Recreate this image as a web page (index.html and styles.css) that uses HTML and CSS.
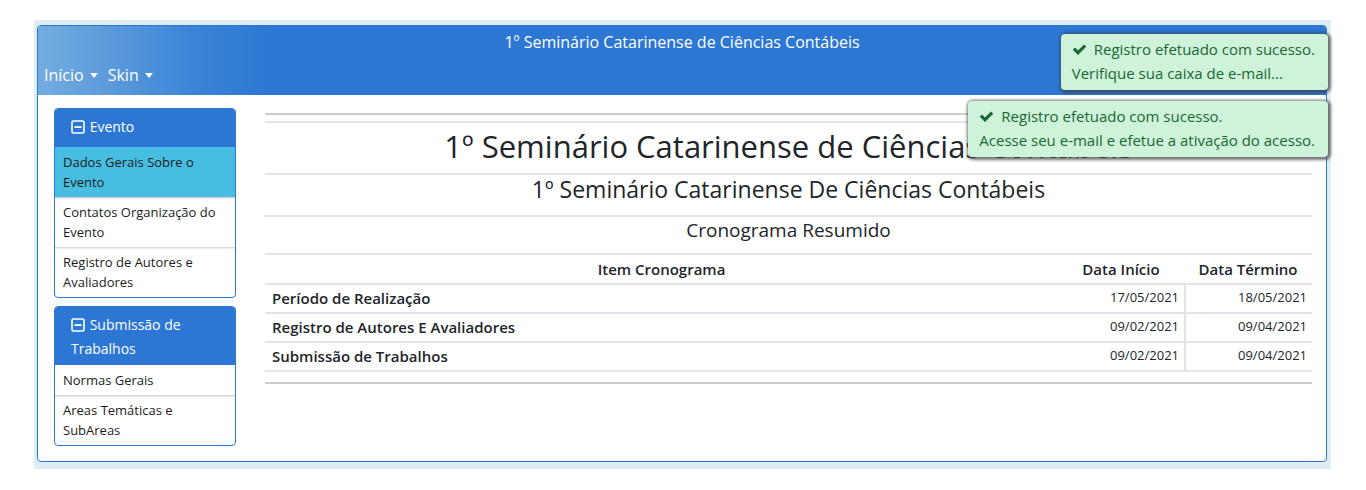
FILE: index.html
```html
<!DOCTYPE html>
<html lang="pt-BR">
<head>
<meta charset="utf-8">
<title>1º Seminário Catarinense de Ciências Contábeis</title>
<link rel="stylesheet" href="styles.css">
</head>
<body>
<div class="outer">
  <div class="panel">
    <header class="topbar">
      <div class="site-title">1º Seminário Catarinense de Ciências Contábeis</div>
      <nav class="nav">
        <span class="nav-item">Início <span class="caret"></span></span>
        <span class="nav-item">Skin <span class="caret"></span></span>
      </nav>
    </header>
    <div class="content">
      <aside class="sidebar">
        <div class="side-panel">
          <div class="side-head">
            <svg class="sq" viewBox="0 0 14 14" width="14" height="14"><rect x="1" y="1" width="12" height="12" rx="1.5" fill="none" stroke="#fff" stroke-width="1.6"/><rect x="3.5" y="6.2" width="7" height="1.8" fill="#fff"/></svg>
            Evento
          </div>
          <div class="side-item active">Dados Gerais Sobre o Evento</div>
          <div class="side-item">Contatos Organização do Evento</div>
          <div class="side-item">Registro de Autores e Avaliadores</div>
        </div>
        <div class="side-panel">
          <div class="side-head two">
            <svg class="sq" viewBox="0 0 14 14" width="14" height="14"><rect x="1" y="1" width="12" height="12" rx="1.5" fill="none" stroke="#fff" stroke-width="1.6"/><rect x="3.5" y="6.2" width="7" height="1.8" fill="#fff"/></svg>
            Submissão de Trabalhos
          </div>
          <div class="side-item">Normas Gerais</div>
          <div class="side-item">Areas Temáticas e SubAreas</div>
        </div>
      </aside>
      <main class="main">
        <div class="rule"></div>
        <div class="sched">
          <div class="row-title">1º Seminário Catarinense de Ciências Contábeis</div>
          <div class="row-sub">1º Seminário Catarinense De Ciências Contábeis</div>
          <div class="row-crono">Cronograma Resumido</div>
          <div class="grid head">
            <div class="c-item">Item Cronograma</div>
            <div class="c-h">Data Início</div>
            <div class="c-h">Data Término</div>
          </div>
          <div class="grid body">
            <div class="c-name">Período de Realização</div>
            <div class="c-date">17/05/2021</div>
            <div class="c-date sep">18/05/2021</div>
          </div>
          <div class="grid body">
            <div class="c-name">Registro de Autores E Avaliadores</div>
            <div class="c-date">09/02/2021</div>
            <div class="c-date sep">09/04/2021</div>
          </div>
          <div class="grid body">
            <div class="c-name">Submissão de Trabalhos</div>
            <div class="c-date">09/02/2021</div>
            <div class="c-date sep">09/04/2021</div>
          </div>
        </div>
        <div class="rule bottom"></div>
      </main>
    </div>
  </div>
</div>

<div class="toasts">
  <div class="toast">
    <div><svg class="check" viewBox="0 0 1792 1792" width="15" height="15"><path fill="currentColor" d="M1671 566q0 40-28 68l-724 724-136 136q-28 28-68 28t-68-28l-136-136-362-362q-28-28-28-68t28-68l136-136q28-28 68-28t68 28l294 295 656-657q28-28 68-28t68 28l136 136q28 28 28 68z"/></svg>Registro efetuado com sucesso.</div>
    <div>Verifique sua caixa de e-mail...</div>
  </div>
  <div class="toast">
    <div><svg class="check" viewBox="0 0 1792 1792" width="15" height="15"><path fill="currentColor" d="M1671 566q0 40-28 68l-724 724-136 136q-28 28-68 28t-68-28l-136-136-362-362q-28-28-28-68t28-68l136-136q28-28 68-28t68 28l294 295 656-657q28-28 68-28t68 28l136 136q28 28 28 68z"/></svg>Registro efetuado com sucesso.</div>
    <div>Acesse seu e-mail e efetue a ativação do acesso.</div>
  </div>
</div>
</body>
</html>
```
FILE: styles.css
```css
* { box-sizing: border-box; }
html, body { margin: 0; padding: 0; background: #fff; }
body {
  font-family: "Open Sans", "Noto Sans", sans-serif;
  color: #212529;
  font-size: 14px;
}

.outer {
  margin: 20px 0 0 34px;
  width: 1297px;
  height: 449px;
  padding: 5px 4px 7px 3px;
  background: #deedf3;
}

.panel {
  height: 100%;
  border: 1px solid #2c77d4;
  border-radius: 4px;
  background: #fff;
  overflow: hidden;
}

.topbar {
  height: 69px;
  padding: 5px 6px 0;
  background: linear-gradient(to right, #74acdf 0, #5c9bdb 70px, #3d85d7 150px, #2c77d4 230px, #2c77d4 100%);
  color: #fff;
  display: flex;
  flex-direction: column;
}
.site-title {
  text-align: center;
  font-size: 16px;
  line-height: 22px;
}
.nav {
  margin-top: 11px;
  display: flex;
  gap: 10px;
  font-size: 16px;
  line-height: 22px;
}
.nav-item { display: inline-flex; align-items: center; gap: 6px; }
.caret {
  display: inline-block;
  width: 0; height: 0;
  border-left: 4.5px solid transparent;
  border-right: 4.5px solid transparent;
  border-top: 5px solid #fff;
  margin-top: 1px;
}

.content {
  display: flex;
  gap: 29px;
  padding: 13px 14px 0 16px;
}

.sidebar {
  width: 182px;
  flex: none;
  display: flex;
  flex-direction: column;
  gap: 8px;
}
.side-panel {
  border: 1px solid #2c77d4;
  border-radius: 4px;
  overflow: hidden;
  background: #fff;
}
.side-head {
  background: #2c77d4;
  color: #fff;
  font-size: 14px;
  line-height: 24px;
  padding: 6px 10px 8px 16px;
}
.side-head.two { padding-bottom: 4px; }
.sq { vertical-align: -2px; margin-right: 1px; }
.side-item {
  font-size: 13px;
  line-height: 20px;
  padding: 4px 8px 5px 8px;
  color: #1c1c1c;
  border-top: 1px solid #d9d9d9;
  box-shadow: inset 0 1px 0 #ececec;
}
.side-head + .side-item {
  border-top: 0;
  box-shadow: none;
  padding-top: 5px;
}
.side-item.active { background: #46bde1; }

.main {
  flex: 1;
  min-width: 0;
  padding-top: 5px;
}
.rule {
  height: 2px;
  background: #cbcbcb;
}
.rule.bottom { margin-top: 10px; }

.sched {
  margin-top: 6px;
  border-top: 2px solid #e2e5e8;
}
.row-title, .row-sub, .row-crono {
  text-align: center;
  border-bottom: 2px solid #e2e5e8;
}
.row-title {
  font-size: 31px;
  line-height: 44px;
  padding: 1px 0 5px;
}
.row-sub {
  font-size: 23px;
  line-height: 28px;
  padding: 0 0 12px;
}
.row-crono {
  font-size: 19px;
  line-height: 26px;
  padding: 0 0 10px;
}

.grid {
  display: grid;
  grid-template-columns: 1fr 126px 128px;
  border-bottom: 2px solid #e2e5e8;
}
.grid.head {
  height: 30px;
  font-size: 15px;
  font-weight: 600;
  line-height: 28px;
  text-align: center;
}
.grid.body { height: 29px; }
.c-name {
  font-size: 15px;
  font-weight: 600;
  line-height: 27px;
  padding-left: 7px;
  white-space: nowrap;
}
.c-date {
  font-size: 13px;
  line-height: 16px;
  padding: 4px 5px 0 0;
  text-align: right;
}
.c-date.sep { border-left: 2px solid #e2e5e8; }

.toasts {
  position: absolute;
  top: 34px;
  right: 38px;
  display: flex;
  flex-direction: column;
  align-items: flex-end;
  gap: 11px;
}
.toast {
  background: #cff2da;
  color: #17692f;
  font-size: 15px;
  line-height: 24px;
  padding: 3px 13px 5px 11px;
  border-radius: 4px;
  box-shadow: 1px 1px 3px 2px rgba(60, 60, 60, 0.7);
  white-space: nowrap;
}
.check { vertical-align: -2px; margin-right: 7px; }
```
